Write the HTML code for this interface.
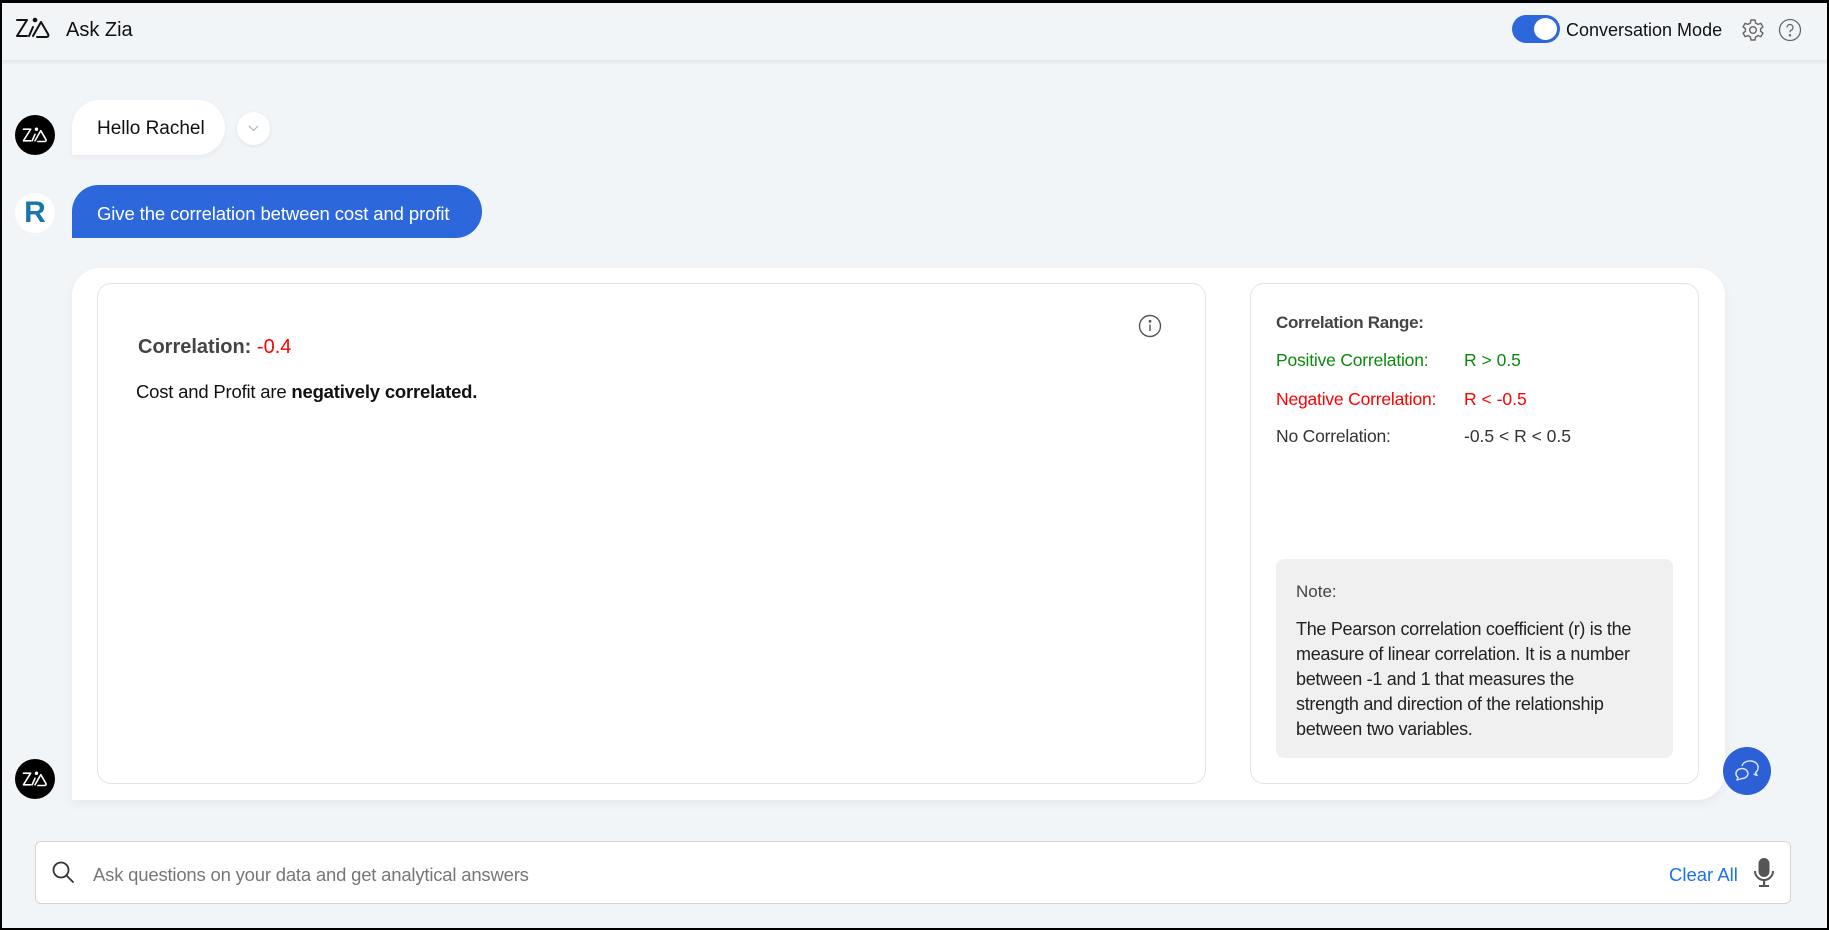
<!DOCTYPE html>
<html><head><meta charset="utf-8"><style>
*{box-sizing:border-box;margin:0;padding:0}
html,body{width:1829px;height:930px;overflow:hidden}
body{background:#f2f5f8;font-family:"Liberation Sans",sans-serif;color:#111;position:relative}
.a{position:absolute}
.hdr{left:0;top:0;width:1829px;height:60px;background:#f2f5f8;box-shadow:0 2px 4px rgba(0,0,0,.08)}
.av{border-radius:50%;width:40px;height:40px;background:#000;display:flex;align-items:center;justify-content:center}
.card{background:#fff;border:1px solid #e3e3e3;border-radius:14px}
.frame{left:0;top:0;width:1829px;height:930px;border:2px solid #000;border-top-width:3px;pointer-events:none}
</style></head><body>
<div class="a hdr">
 <svg class="a" style="left:15px;top:16px" width="36" height="24" viewBox="0 0 36 24" fill="none" stroke="#111" stroke-width="2" stroke-linecap="round" stroke-linejoin="round"><path d="M2 4h10L2 20h10"/><path d="M14 20l4-9"/><circle cx="20" cy="4" r="1.3" fill="#111"/><path d="M18 20l8-14 7 12c1 2 0 3-2 3H22"/></svg>
 <div class="a" style="left:66px;top:19px;font-size:20px">Ask Zia</div>
 <div class="a" style="left:1512px;top:15px;width:48px;height:28px;border-radius:14px;background:#2d67dc"></div>
 <div class="a" style="left:1534px;top:18px;width:23px;height:22px;border-radius:50%;background:#fff"></div>
 <div class="a" style="left:1566px;top:20px;font-size:18px">Conversation Mode</div>
 <svg class="a" style="left:1741px;top:18px" width="24" height="24" viewBox="0 0 24 24" fill="none" stroke="#666" stroke-width="1.4"><path d="M10 2h4l.6 3 2.4 1.4 2.9-1 2 3.4-2.3 2v2.4l2.3 2-2 3.4-2.9-1L14.6 19 14 22h-4l-.6-3L7 17.6l-2.9 1-2-3.4 2.3-2v-2.4l-2.3-2 2-3.4 2.9 1L9.4 5z"/><circle cx="12" cy="12" r="3.3"/></svg>
 <svg class="a" style="left:1778px;top:18px" width="24" height="24" viewBox="0 0 24 24" fill="none" stroke="#666" stroke-width="1.3"><circle cx="12" cy="12" r="10.5"/><path d="M9 9.5a3 3 0 1 1 4 2.8c-.8.4-1 1-1 2"/><circle cx="12" cy="17.3" r=".6" fill="#666"/></svg>
</div>

<div class="a av" style="left:15px;top:115px"><svg width="26" height="18" viewBox="0 0 36 24" fill="none" stroke="#fff" stroke-width="2.2" stroke-linecap="round" stroke-linejoin="round"><path d="M2 4h10L2 20h10"/><path d="M14 20l4-9"/><circle cx="20" cy="4" r="1.3" fill="#fff"/><path d="M18 20l8-14 7 12c1 2 0 3-2 3H22"/></svg></div>
<div class="a" style="left:72px;top:100px;width:153px;height:55px;background:#fff;border-radius:28px 28px 28px 0;box-shadow:0 2px 6px rgba(0,0,0,.05)"></div>
<div class="a" style="left:97px;top:118px;font-size:19px">Hello Rachel</div>
<div class="a" style="left:237px;top:112px;width:33px;height:33px;border-radius:50%;background:#fff;box-shadow:0 1px 4px rgba(0,0,0,.08)"><svg class="a" style="left:11px;top:13px" width="11" height="7" viewBox="0 0 11 7" fill="none" stroke="#aaa"><path d="M1 1l4.5 4.5L10 1"/></svg></div>

<div class="a av" style="left:15px;top:193px;background:#fff;font-weight:bold;font-size:30px;color:#1a75a8">R</div>
<div class="a" style="left:72px;top:185px;width:410px;height:53px;background:#2d67dc;border-radius:27px 27px 27px 0"></div>
<div class="a" style="left:97px;top:203px;font-size:18.5px;color:#fff;letter-spacing:-.1px">Give the correlation between cost and profit</div>

<div class="a" style="left:72px;top:268px;width:1653px;height:532px;background:#fff;border-radius:28px 28px 28px 0;box-shadow:0 4px 10px rgba(0,0,0,.05)"></div>
<div class="a card" style="left:97px;top:283px;width:1109px;height:501px"></div>
<div class="a" style="left:138px;top:336px;font-size:20px;font-weight:bold;color:#444">Correlation: <span style="color:#f00;font-weight:normal">-0.4</span></div>
<div class="a" style="left:136px;top:381px;font-size:18.5px;letter-spacing:-.2px">Cost and Profit are <b>negatively correlated.</b></div>
<svg class="a" style="left:1138px;top:314px" width="24" height="24" viewBox="0 0 24 24" fill="none" stroke="#555" stroke-width="1.4"><circle cx="12" cy="12" r="10.5"/><path d="M12 10.5v6.5"/><circle cx="12" cy="7.3" r=".7" fill="#555"/></svg>

<div class="a card" style="left:1250px;top:283px;width:449px;height:501px"></div>
<div class="a" style="left:1276px;top:313px;font-size:17px;font-weight:bold;color:#444;letter-spacing:-.3px">Correlation Range:</div>
<div class="a" style="left:1276px;top:350px;font-size:17.5px;color:#0a8a0a;letter-spacing:-.2px">Positive Correlation:</div>
<div class="a" style="left:1464px;top:350px;font-size:17.5px;color:#0a8a0a">R &gt; 0.5</div>
<div class="a" style="left:1276px;top:389px;font-size:17.5px;color:#f00;letter-spacing:-.2px">Negative Correlation:</div>
<div class="a" style="left:1464px;top:389px;font-size:17.5px;color:#f00">R &lt; -0.5</div>
<div class="a" style="left:1276px;top:426px;font-size:17.5px;color:#333;letter-spacing:-.2px">No Correlation:</div>
<div class="a" style="left:1464px;top:426px;font-size:17.5px;color:#333">-0.5 &lt; R &lt; 0.5</div>
<div class="a" style="left:1276px;top:559px;width:397px;height:199px;background:#f0f0f0;border-radius:8px"></div>
<div class="a" style="left:1296px;top:582px;font-size:17px;color:#444">Note:</div>
<div class="a" style="left:1296px;top:617px;width:380px;font-size:18px;line-height:25px;color:#222;letter-spacing:-.3px;white-space:nowrap">The Pearson correlation coefficient (r) is the<br>measure of linear correlation. It is a number<br>between -1 and 1 that measures the<br>strength and direction of the relationship<br>between two variables.</div>

<div class="a av" style="left:15px;top:759px"><svg width="26" height="18" viewBox="0 0 36 24" fill="none" stroke="#fff" stroke-width="2.2" stroke-linecap="round" stroke-linejoin="round"><path d="M2 4h10L2 20h10"/><path d="M14 20l4-9"/><circle cx="20" cy="4" r="1.3" fill="#fff"/><path d="M18 20l8-14 7 12c1 2 0 3-2 3H22"/></svg></div>
<div class="a" style="left:1723px;top:747px;width:48px;height:48px;border-radius:50%;background:#2d5fd6;display:flex;align-items:center;justify-content:center"><svg width="26" height="22" viewBox="0 0 26 22" fill="none" stroke="#dfe7fb" stroke-width="1.4" stroke-linejoin="round"><path d="M8 6a8 6 0 0 1 16 2c0 2-1 3.5-2.5 4.5l1.5 3-3.5-1.5"/><path d="M2 14a6 5 0 1 1 6 4.5L3 20l1-2.5A5 5 0 0 1 2 14z"/></svg></div>

<div class="a" style="left:35px;top:841px;width:1756px;height:63px;background:#fff;border:1px solid #d4d4d4;border-radius:6px"></div>
<svg class="a" style="left:51px;top:860px" width="24" height="24" viewBox="0 0 24 24" fill="none" stroke="#333" stroke-width="1.8" stroke-linecap="round"><circle cx="10" cy="10" r="7.5"/><path d="M15.5 15.5L22 22"/></svg>
<div class="a" style="left:93px;top:864px;font-size:18.5px;color:#777;letter-spacing:-.2px">Ask questions on your data and get analytical answers</div>
<div class="a" style="left:1669px;top:864px;font-size:18.5px;color:#1a73e8">Clear All</div>
<svg class="a" style="left:1753px;top:857px" width="22" height="32" viewBox="0 0 22 32" fill="#555"><rect x="5.5" y="1" width="11" height="19" rx="5.5"/><path d="M2 14a9 9 0 0 0 18 0" fill="none" stroke="#555" stroke-width="2"/><rect x="10" y="23" width="2.2" height="6"/><rect x="6" y="28" width="10" height="2"/></svg>
<div class="a frame"></div>
</body></html>
